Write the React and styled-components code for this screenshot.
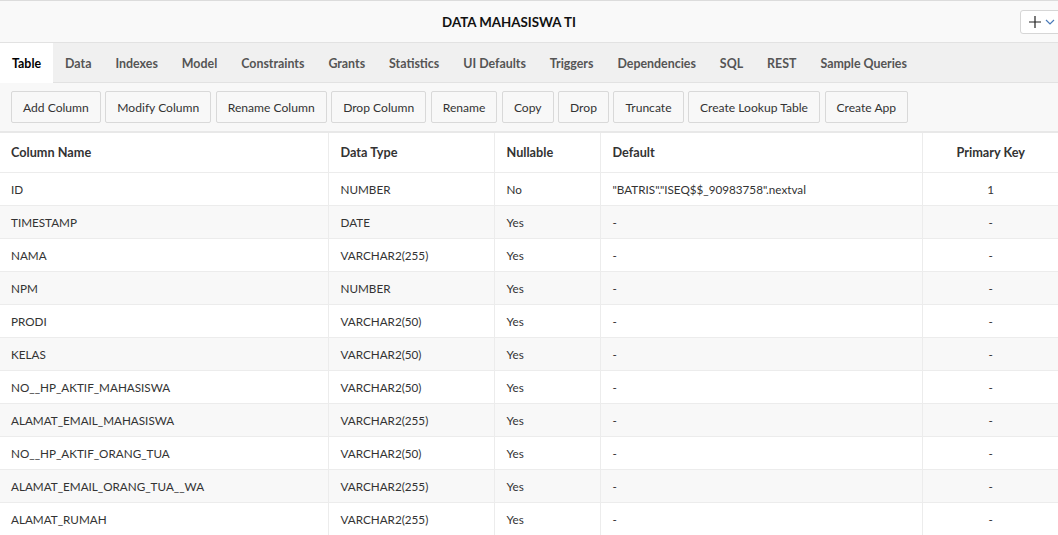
import React from "react";
import styled, { createGlobalStyle } from "styled-components";

const Global = createGlobalStyle`
  html, body { margin: 0; padding: 0; background: #fff; }
  body { font-family: Lato, "Open Sans", sans-serif; color: #333; overflow: hidden; }
  * { box-sizing: border-box; }
`;

const Page = styled.div`
  width: 1058px;
  height: 535px;
  overflow: hidden;
  border-top: 1px solid #dcdcdc;
`;

const TitleBar = styled.div`
  position: relative;
  height: 42px;
  background: #f9f9f9;
  border-bottom: 1px solid #e2e2e2;
  display: flex;
  align-items: center;
  justify-content: center;
  padding-right: 40px;
`;

const Title = styled.h1`
  margin: 0;
  font-size: 13.3px;
  font-weight: 700;
  color: #111;
`;

const AddMenu = styled.button`
  position: absolute;
  right: -6px;
  top: 9px;
  width: 44px;
  height: 24px;
  border: 1px solid #d6d6d6;
  border-radius: 3px;
  background: #fff;
  display: flex;
  align-items: center;
  padding: 0 0 0 7px;
  gap: 3px;
`;

const Tabs = styled.div`
  height: 40px;
  background: #f0f0f0;
  border-bottom: 1px solid #e2e2e2;
  display: flex;
`;

const Tab = styled.div`
  padding: 0 12px;
  display: flex;
  align-items: center;
  font-size: 12.4px;
  font-weight: 700;
  color: ${(p) => (p.$active ? "#000" : "#555")};
  background: ${(p) => (p.$active ? "#fff" : "transparent")};
  margin-bottom: -1px;
`;

const Toolbar = styled.div`
  height: 50px;
  background: #f8f8f8;
  border-bottom: 2px solid #e8e8e8;
  display: flex;
  align-items: center;
  padding: 0 0 0 11px;
  gap: 4.5px;
`;

const Btn = styled.button`
  height: 32px;
  padding: 0 11px;
  border: 1px solid #d9d9d9;
  border-radius: 2px;
  background: #f8f8f8;
  font-family: inherit;
  font-size: 12.1px;
  color: #333;
  white-space: nowrap;
`;

const Table = styled.table`
  width: 1058px;
  border-collapse: collapse;
  table-layout: fixed;
`;

const Th = styled.th`
  height: 39px;
  padding: 0 11px 0 12px;
  line-height: 16px;
  text-align: ${(p) => (p.$center ? "center" : "left")};
  font-size: 12.7px;
  font-weight: 700;
  color: #333;
  border-right: 1px solid #ececec;
  border-bottom: 1px solid #ececec;
  &:first-child { padding-left: 11px; }
  &:last-child { border-right: none; }
`;

const Tr = styled.tr`
  background: ${(p) => (p.$alt ? "#f8f8f8" : "#fff")};
`;

const Td = styled.td`
  height: 33px;
  padding: 1px 11px 0 12px;
  line-height: 16px;
  text-align: ${(p) => (p.$center ? "center" : "left")};
  font-size: 11.7px;
  color: #333;
  border-right: 1px solid #ececec;
  border-bottom: 1px solid #ececec;
  white-space: nowrap;
  &:first-child { padding-left: 11px; }
  &:last-child { border-right: none; }
`;

const tabs = ["Table", "Data", "Indexes", "Model", "Constraints", "Grants", "Statistics", "UI Defaults", "Triggers", "Dependencies", "SQL", "REST", "Sample Queries"];
const buttons = ["Add Column", "Modify Column", "Rename Column", "Drop Column", "Rename", "Copy", "Drop", "Truncate", "Create Lookup Table", "Create App"];
const rows = [
  ["ID", "NUMBER", "No", "\"BATRIS\".\"ISEQ$$_90983758\".nextval", "1"],
  ["TIMESTAMP", "DATE", "Yes", "-", "-"],
  ["NAMA", "VARCHAR2(255)", "Yes", "-", "-"],
  ["NPM", "NUMBER", "Yes", "-", "-"],
  ["PRODI", "VARCHAR2(50)", "Yes", "-", "-"],
  ["KELAS", "VARCHAR2(50)", "Yes", "-", "-"],
  ["NO__HP_AKTIF_MAHASISWA", "VARCHAR2(50)", "Yes", "-", "-"],
  ["ALAMAT_EMAIL_MAHASISWA", "VARCHAR2(255)", "Yes", "-", "-"],
  ["NO__HP_AKTIF_ORANG_TUA", "VARCHAR2(50)", "Yes", "-", "-"],
  ["ALAMAT_EMAIL_ORANG_TUA__WA", "VARCHAR2(255)", "Yes", "-", "-"],
  ["ALAMAT_RUMAH", "VARCHAR2(255)", "Yes", "-", "-"],
];

export default function App() {
  return (
    <Page>
      <Global />
      <TitleBar>
        <Title>DATA MAHASISWA TI</Title>
        <AddMenu>
          <svg width="14" height="14" viewBox="0 0 14 14"><path d="M7 1v12M1 7h12" stroke="#222" strokeWidth="1.2" /></svg>
          <svg width="10" height="10" viewBox="0 0 10 10"><path d="M1 3l4 4 4-4" stroke="#4a7ab8" strokeWidth="1.2" fill="none" /></svg>
        </AddMenu>
      </TitleBar>
      <Tabs>
        {tabs.map((t, i) => (
          <Tab key={t} $active={i === 0}>{t}</Tab>
        ))}
      </Tabs>
      <Toolbar>
        {buttons.map((b) => (
          <Btn key={b}>{b}</Btn>
        ))}
      </Toolbar>
      <Table>
        <colgroup>
          <col style={{ width: 328 }} />
          <col style={{ width: 166 }} />
          <col style={{ width: 106 }} />
          <col style={{ width: 322 }} />
          <col style={{ width: 136 }} />
        </colgroup>
        <thead>
          <tr>
            <Th>Column Name</Th>
            <Th>Data Type</Th>
            <Th>Nullable</Th>
            <Th>Default</Th>
            <Th $center>Primary Key</Th>
          </tr>
        </thead>
        <tbody>
          {rows.map((r, i) => (
            <Tr key={r[0]} $alt={i % 2 === 1}>
              <Td>{r[0]}</Td>
              <Td>{r[1]}</Td>
              <Td>{r[2]}</Td>
              <Td>{r[3]}</Td>
              <Td $center>{r[4]}</Td>
            </Tr>
          ))}
        </tbody>
      </Table>
    </Page>
  );
}
